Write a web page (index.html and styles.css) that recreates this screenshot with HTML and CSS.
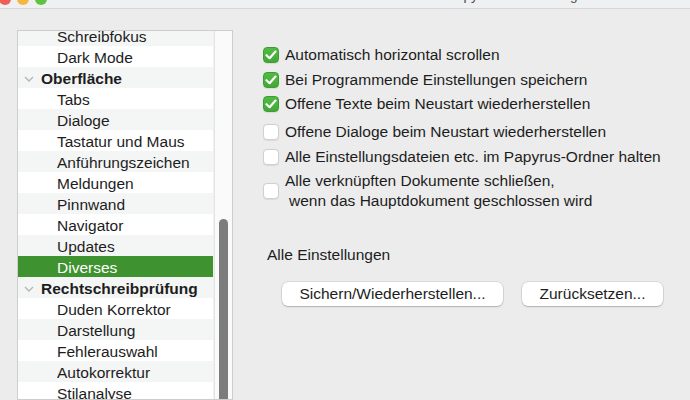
FILE: index.html
```html
<!DOCTYPE html>
<html lang="de">
<head>
<meta charset="utf-8">
<title>Papyrus – Einstellungen</title>
<link rel="stylesheet" href="styles.css">
</head>
<body>
<div class="window">
  <header class="titlebar">
    <div class="lights">
      <span class="light red"></span>
      <span class="light yellow"></span>
      <span class="light green"></span>
    </div>
    <div class="title">Papyrus – Einstellungen</div>
  </header>

  <main class="content">
    <nav class="outline">
      <div class="outline-rows">
        <ul class="rows">
          <li class="row child">Schreibfokus</li>
          <li class="row child">Dark Mode</li>
          <li class="row group"><span class="chevron"><svg width="10" height="6" viewBox="0 0 10 6"><path d="M1 1 L5 5 L9 1" fill="none" stroke="#b4b4b4" stroke-width="1.3"/></svg></span>Oberfläche</li>
          <li class="row child">Tabs</li>
          <li class="row child">Dialoge</li>
          <li class="row child">Tastatur und Maus</li>
          <li class="row child">Anführungszeichen</li>
          <li class="row child">Meldungen</li>
          <li class="row child">Pinnwand</li>
          <li class="row child">Navigator</li>
          <li class="row child">Updates</li>
          <li class="row child selected">Diverses</li>
          <li class="row group"><span class="chevron"><svg width="10" height="6" viewBox="0 0 10 6"><path d="M1 1 L5 5 L9 1" fill="none" stroke="#b4b4b4" stroke-width="1.3"/></svg></span>Rechtschreibprüfung</li>
          <li class="row child">Duden Korrektor</li>
          <li class="row child">Darstellung</li>
          <li class="row child">Fehlerauswahl</li>
          <li class="row child">Autokorrektur</li>
          <li class="row child">Stilanalyse</li>
        </ul>
      </div>
      <div class="scrollbar"><div class="thumb"></div></div>
    </nav>

    <section class="pane">
      <div class="options">
        <label class="option"><span class="box checked"><svg width="12" height="10" viewBox="0 0 12 10"><path d="M1.5 5.2 L4.6 8.2 L10.5 1.6" fill="none" stroke="#fff" stroke-width="2.2" stroke-linecap="round" stroke-linejoin="round"/></svg></span>Automatisch horizontal scrollen</label>
        <label class="option"><span class="box checked"><svg width="12" height="10" viewBox="0 0 12 10"><path d="M1.5 5.2 L4.6 8.2 L10.5 1.6" fill="none" stroke="#fff" stroke-width="2.2" stroke-linecap="round" stroke-linejoin="round"/></svg></span>Bei Programmende Einstellungen speichern</label>
        <label class="option"><span class="box checked"><svg width="12" height="10" viewBox="0 0 12 10"><path d="M1.5 5.2 L4.6 8.2 L10.5 1.6" fill="none" stroke="#fff" stroke-width="2.2" stroke-linecap="round" stroke-linejoin="round"/></svg></span>Offene Texte beim Neustart wiederherstellen</label>
        <label class="option spaced"><span class="box"></span>Offene Dialoge beim Neustart wiederherstellen</label>
        <label class="option"><span class="box"></span>Alle Einstellungsdateien etc. im Papyrus-Ordner halten</label>
        <label class="option multi"><span class="box"></span><span class="lines"><span>Alle verknüpften Dokumente schließen,</span><span class="indent">wenn das Hauptdokument geschlossen wird</span></span></label>
      </div>

      <div class="all-settings">
        <div class="section-label">Alle Einstellungen</div>
        <div class="buttons">
          <button class="btn wide">Sichern/Wiederherstellen...</button>
          <button class="btn narrow">Zurücksetzen...</button>
        </div>
      </div>
    </section>
  </main>
</div>
</body>
</html>
```

FILE: styles.css
```css
* { box-sizing: border-box; }

html, body {
  margin: 0;
  padding: 0;
  width: 690px;
  height: 400px;
  overflow: hidden;
  background: #ececec;
  font-family: "Liberation Sans", Arial, sans-serif;
  color: #1d1d1d;
}

.window {
  display: flex;
  flex-direction: column;
  height: 400px;
  overflow: hidden;
}

/* title bar, scrolled mostly out of view at the top */
.titlebar {
  height: 9px;
  background: #eef0f2;
  border-bottom: 1px solid #d6d6d6;
  display: flex;
  align-items: flex-end;
  overflow: hidden;
  flex: none;
}

.lights {
  display: flex;
  gap: 6px;
  margin-left: -1px;
  transform: translateY(-3px);
}

.light {
  width: 12px;
  height: 12px;
  border-radius: 50%;
  display: block;
}
.light.red { background: #ee5f57; }
.light.yellow { background: #f4b73f; }
.light.green { background: #5ec340; }

.title {
  margin-left: 400px;
  font-size: 13.5px;
  color: #4b4b4b;
  line-height: 14px;
  transform: translateY(-5px);
  white-space: nowrap;
}

.content {
  flex: 1;
  display: flex;
  align-items: flex-start;
  padding: 21px 0 0 17px;
  min-height: 0;
  overflow: hidden;
}

/* outline list on the left */
.outline {
  width: 216px;
  height: 370px;
  border: 1px solid #cdcdcd;
  background: #fafafa;
  display: flex;
  flex: none;
  overflow: hidden;
}

.outline-rows {
  width: 196px;
  background: #fff;
  overflow: hidden;
  border-right: 1px solid #f0f0f0;
}

.rows {
  list-style: none;
  margin: -6px 0 0 0;
  padding: 0;
}

.row {
  height: 21px;
  display: flex;
  align-items: center;
  font-size: 15.5px;
  padding-top: 2px;
  white-space: nowrap;
}
.row:nth-child(odd) { background: #f4f5f5; }
.row:nth-child(even) { background: #fff; }

.row.child { padding-left: 39px; }

.row.group {
  padding-left: 5px;
  font-weight: bold;
}

.chevron {
  width: 18px;
  display: flex;
  align-items: center;
  justify-content: flex-start;
  padding-left: 1px;
}

.row.selected {
  background: #3e9230;
  color: #fff;
}

.scrollbar {
  flex: 1;
  position: relative;
  border-left: 1px solid #e4e4e4;
}

.thumb {
  position: absolute;
  left: 4px;
  top: 188px;
  width: 9px;
  height: 300px;
  border-radius: 5px;
  background: #7c7c7c;
}

/* settings pane */
.pane {
  margin-left: 30px;
  padding-top: 13px;
  display: flex;
  flex-direction: column;
  font-size: 15.5px;
}

.options {
  display: flex;
  flex-direction: column;
}

.option {
  display: flex;
  align-items: center;
  height: 24.5px;
  white-space: nowrap;
}
.option.spaced { margin-top: 3.5px; }
.option.multi { height: 45px; margin-top: -1px; }

.box {
  width: 16px;
  height: 16px;
  border-radius: 4px;
  background: #fff;
  border: 1px solid #d0d0d0;
  box-shadow: 0 0.5px 1px rgba(0,0,0,0.08);
  margin-right: 6px;
  display: flex;
  align-items: center;
  justify-content: center;
  flex: none;
}

.box.checked {
  background: linear-gradient(#52bb45, #41a836);
  border-color: #3c9e31;
}

.lines {
  display: flex;
  flex-direction: column;
  line-height: 20px;
}
.lines .indent { padding-left: 4px; }

.all-settings {
  margin-top: 33px;
  margin-left: 4px;
}

.section-label {
  font-size: 15.5px;
}

.buttons {
  display: flex;
  gap: 19px;
  margin-top: 18px;
  margin-left: 15px;
}

.btn {
  font-family: inherit;
  font-size: 15.5px;
  color: #1d1d1d;
  height: 24px;
  background: #fff;
  border: none;
  border-radius: 6px;
  box-shadow: 0 0 0 0.5px rgba(0,0,0,0.15), 0 1px 1.5px rgba(0,0,0,0.2);
  padding: 0;
}
.btn.wide { width: 221px; }
.btn.narrow { width: 141px; }
```
